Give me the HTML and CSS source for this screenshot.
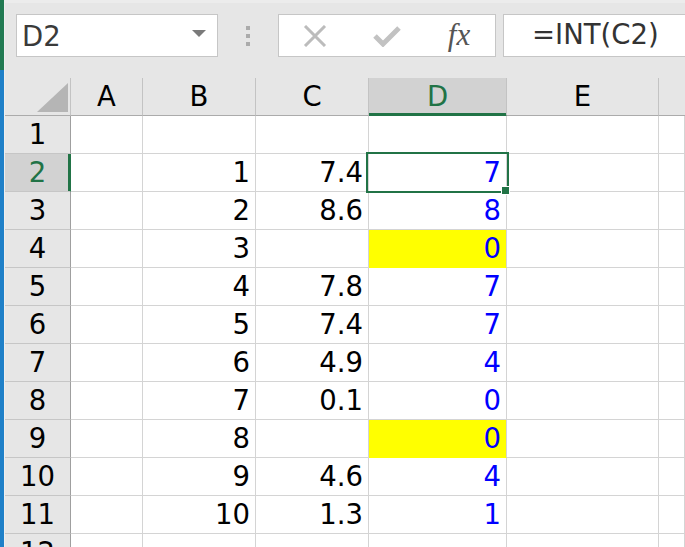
FILE: index.html
```html
<!DOCTYPE html>
<html>
<head>
<meta charset="utf-8">
<link rel="stylesheet" href="styles.css">
</head>
<body>
<div class="window">
  <div class="edge"></div>
  <div class="app">
    <div class="toolbar">
      <div class="namebox">
        <span class="name">D2</span>
        <svg class="caret" width="14" height="7" viewBox="0 0 14 7"><polygon points="0,0 14,0 7,7" fill="#7a7a7a"/></svg>
      </div>
      <div class="grip"><i></i><i></i><i></i></div>
      <div class="fbtns">
        <span class="fbtn"><svg width="24" height="22" viewBox="0 0 24 22"><path d="M2 1 L22 21 M22 1 L2 21" stroke="#bcbcbc" stroke-width="3" fill="none"/></svg></span>
        <span class="fbtn"><svg width="28" height="22" viewBox="0 0 28 22"><path d="M2 11 L10 19 L26 3" stroke="#c2c2c2" stroke-width="5" fill="none"/></svg></span>
        <span class="fbtn fx">fx</span>
      </div>
      <div class="formula">=INT(C2)</div>
    </div>
    <div class="sheet">
      <div class="ch corner"><svg width="31" height="29" viewBox="0 0 31 29"><polygon points="31,0 31,29 0,29" fill="#b5b5b5"/></svg></div>
      <div class="ch">A</div><div class="ch">B</div><div class="ch">C</div><div class="ch sel">D</div><div class="ch">E</div><div class="ch last"></div>

      <div class="rh">1</div><div class="c"></div><div class="c"></div><div class="c"></div><div class="c"></div><div class="c"></div><div class="c"></div>
      <div class="rh sel">2</div><div class="c"></div><div class="c">1</div><div class="c">7.4</div><div class="c v active">7<span class="selbox"></span><span class="handle"></span></div><div class="c"></div><div class="c"></div>
      <div class="rh">3</div><div class="c"></div><div class="c">2</div><div class="c">8.6</div><div class="c v">8</div><div class="c"></div><div class="c"></div>
      <div class="rh">4</div><div class="c"></div><div class="c">3</div><div class="c"></div><div class="c v y">0</div><div class="c"></div><div class="c"></div>
      <div class="rh">5</div><div class="c"></div><div class="c">4</div><div class="c">7.8</div><div class="c v">7</div><div class="c"></div><div class="c"></div>
      <div class="rh">6</div><div class="c"></div><div class="c">5</div><div class="c">7.4</div><div class="c v">7</div><div class="c"></div><div class="c"></div>
      <div class="rh">7</div><div class="c"></div><div class="c">6</div><div class="c">4.9</div><div class="c v">4</div><div class="c"></div><div class="c"></div>
      <div class="rh">8</div><div class="c"></div><div class="c">7</div><div class="c">0.1</div><div class="c v">0</div><div class="c"></div><div class="c"></div>
      <div class="rh">9</div><div class="c"></div><div class="c">8</div><div class="c"></div><div class="c v y">0</div><div class="c"></div><div class="c"></div>
      <div class="rh">10</div><div class="c"></div><div class="c">9</div><div class="c">4.6</div><div class="c v">4</div><div class="c"></div><div class="c"></div>
      <div class="rh">11</div><div class="c"></div><div class="c">10</div><div class="c">1.3</div><div class="c v">1</div><div class="c"></div><div class="c"></div>
      <div class="rh">12</div><div class="c"></div><div class="c"></div><div class="c"></div><div class="c"></div><div class="c"></div><div class="c"></div>
    </div>
  </div>
</div>
</body>
</html>
```

FILE: styles.css
```css
html, body {
  margin: 0;
  padding: 0;
}
body {
  width: 685px;
  height: 547px;
  overflow: hidden;
  background: #e6e6e6;
  font-family: "DejaVu Sans", Verdana, sans-serif;
}
.window {
  display: flex;
  width: 685px;
  height: 547px;
  overflow: hidden;
}
.edge {
  flex: 0 0 5px;
  background:
    linear-gradient(to right, transparent 0 4px, #eeeeee 4px 5px),
    linear-gradient(to bottom, #217a52 0 70px, #1f80c8 70px);
}
.app {
  flex: 1;
  min-width: 0;
  display: flex;
  flex-direction: column;
  overflow: hidden;
}
.toolbar {
  flex: 0 0 78px;
  height: 78px;
  box-sizing: border-box;
  padding-top: 14px;
  padding-left: 11px;
  display: flex;
  align-items: flex-start;
  background: linear-gradient(to bottom, #ececec 0 3px, #e6e6e6 3px);
}
.namebox {
  flex: 0 0 202px;
  height: 43px;
  box-sizing: border-box;
  border: 1px solid #c6c6c6;
  background: #fff;
  display: flex;
  align-items: center;
  justify-content: space-between;
  padding: 0 11px 0 5px;
}
.name {
  font-size: 27.5px;
  line-height: 41px;
  padding-top: 1px;
  color: #3a3a3a;
}
.caret {
  display: block;
  margin-top: -5px;
}
.grip {
  flex: 0 0 60px;
  height: 43px;
  display: flex;
  flex-direction: column;
  align-items: center;
  padding-top: 12px;
  box-sizing: border-box;
  gap: 4px;
}
.grip i {
  display: block;
  width: 4px;
  height: 4px;
  background: #ababab;
}
.fbtns {
  flex: 0 0 217px;
  height: 43px;
  box-sizing: border-box;
  border: 1px solid #c6c6c6;
  background: #fff;
  display: flex;
}
.fbtn {
  width: 72px;
  display: flex;
  align-items: center;
  justify-content: center;
}
.fbtn svg {
  display: block;
}
.fx {
  font-family: "Liberation Serif", "Times New Roman", serif;
  font-style: italic;
  font-size: 31px;
  color: #555;
  padding-bottom: 2px;
}
.formula {
  margin-left: 7px;
  flex: 1;
  height: 43px;
  box-sizing: border-box;
  border: 1px solid #c6c6c6;
  border-right: none;
  background: #fff;
  padding-left: 28px;
  font-size: 27.5px;
  line-height: 39px;
  color: #333;
  white-space: nowrap;
}
.sheet {
  flex: 0 0 auto;
  display: grid;
  grid-template-columns: 66px 72px 113px 113px 138px 152px 1fr;
  grid-auto-rows: 38px;
  background: #fff;
  font-size: 27.5px;
}
.ch, .rh, .c {
  box-sizing: border-box;
  line-height: 37px;
  white-space: nowrap;
}
.ch {
  background: #e6e6e6;
  border-right: 1px solid #c3c3c3;
  border-bottom: 1px solid #ababab;
  text-align: center;
  color: #000;
}
.ch.corner {
  display: flex;
  align-items: flex-end;
  justify-content: flex-end;
  padding: 0 2px 3px 0;
}
.ch.corner svg {
  display: block;
}
.ch.last {
  border-right: none;
}
.ch.sel {
  background: #d2d2d2;
  color: #217346;
  border-bottom-color: #217346;
  box-shadow: inset 0 -2px 0 #217346;
}
.rh {
  background: #e6e6e6;
  border-right: 1px solid #9f9f9f;
  border-bottom: 1px solid #c6c6c6;
  text-align: center;
  color: #000;
}
.rh.sel {
  background: #d2d2d2;
  color: #217346;
  border-right-color: #217346;
  box-shadow: inset -2px 0 0 #217346;
}
.c {
  border-right: 1px solid #d4d4d4;
  border-bottom: 1px solid #d4d4d4;
  text-align: right;
  padding-right: 5px;
  color: #000;
}
.c.v {
  color: #0000ff;
}
.c.y {
  background: #ffff00;
  border-bottom-color: #ffff00;
}
.active {
  position: relative;
}
.selbox {
  position: absolute;
  left: -3px;
  top: -2px;
  width: 143px;
  height: 41px;
  box-sizing: border-box;
  border: 2px solid #217346;
}
.handle {
  position: absolute;
  left: 132px;
  top: 32px;
  width: 9px;
  height: 9px;
  box-sizing: border-box;
  background: #217346;
  border: 1px solid #fff;
}
```
